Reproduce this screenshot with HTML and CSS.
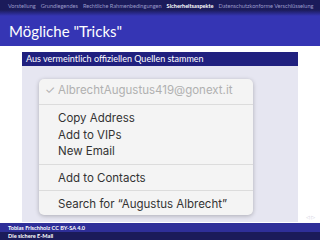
FILE: index.html
```html
<!DOCTYPE html>
<html lang="de">
<head>
    <meta charset="UTF-8">
    <title>Mögliche "Tricks"</title>
    <link rel="stylesheet" href="styles.css">
</head>
<body>
    <div class="slide">
        <div class="nav">
            <span>Vorstellung</span>
            <span>Grundlegendes</span>
            <span>Rechtliche Rahmenbedingungen</span>
            <span class="current">Sicherheitsaspekte</span>
            <span>Datenschutzkonforme Verschlüsselung</span>
        </div>
        <div class="fade"></div>
        <div class="frametitle">Mögliche "Tricks"</div>

        <div class="content">
            <div class="block">
                <div class="block-title">Aus vermeintlich offiziellen Quellen stammen</div>
                <div class="block-body">
                    <div class="menu">
                        <div class="item disabled"><span class="check">✓</span>AlbrechtAugustus419@gonext.it</div>
                        <div class="sep"></div>
                        <div class="item">Copy Address</div>
                        <div class="item">Add to VIPs</div>
                        <div class="item">New Email</div>
                        <div class="sep"></div>
                        <div class="item">Add to Contacts</div>
                        <div class="sep"></div>
                        <div class="item">Search for “Augustus Albrecht”</div>
                    </div>
                </div>
            </div>
            <div class="navsym">◁ ▷</div>
        </div>

        <div class="footer">
            <div class="foot-author">Tobias Frischholz CC BY-SA 4.0</div>
            <div class="foot-title">Die sichere E-Mail</div>
        </div>
    </div>
</body>
</html>
```

FILE: styles.css
```css
body {
    margin: 0;
    font-family: Lato, "DejaVu Sans", sans-serif;
    background: #fff;
}
.slide {
    width: 320px;
    height: 240px;
    display: flex;
    flex-direction: column;
    overflow: hidden;
}
.nav {
    height: 10px;
    background: #1b1b5a;
    display: flex;
    gap: 5px;
    align-items: center;
    padding-left: 8px;
    font-size: 5.6px;
    color: #9a9ac8;
    white-space: nowrap;
}
.nav .current {
    color: #fff;
    font-weight: bold;
}
.fade {
    height: 6px;
    background: linear-gradient(#1b1b5a, #3535b4);
}
.frametitle {
    height: 30px;
    background: #3535b4;
    color: #fff;
    font-size: 15px;
    padding-left: 9px;
    line-height: 30px;
}
.content {
    flex: 1;
    position: relative;
    padding: 6px 22px 0 22px;
}
.block-title {
    background: #20207f;
    color: #fff;
    font-size: 9px;
    height: 14px;
    line-height: 14px;
    padding-left: 4px;
}
.block-body {
    background: #e6e6f1;
    height: 156px;
    padding: 13px 0 0 17px;
    box-sizing: border-box;
}
.menu {
    width: 214px;
    height: 136px;
    background: #f4f4f4;
    border-radius: 5px;
    box-shadow: 0 1px 4px rgba(0, 0, 0, 0.25);
    font-family: Inter, Roboto, sans-serif;
    font-size: 11.5px;
    color: #333;
    padding-top: 1px;
    box-sizing: border-box;
}
.item {
    padding-left: 19px;
    height: 16.5px;
    line-height: 16px;
}
.item.disabled {
    color: #b0b0b0;
    position: relative;
    height: 20px;
    line-height: 20px;
}
.check {
    position: absolute;
    left: 6px;
}
.sep {
    height: 1px;
    background: #dcdcdc;
    margin: 4px 0 5px;
}
.navsym {
    position: absolute;
    right: 5px;
    bottom: 3px;
    font-size: 5px;
    color: #c8c8d8;
}
.footer {
    font-size: 5.6px;
    font-weight: bold;
    color: #fff;
}
.foot-author {
    background: #2f2f99;
    height: 9px;
    line-height: 9px;
    padding-left: 8px;
}
.foot-title {
    background: #1b1b5a;
    height: 8px;
    line-height: 8px;
    padding-left: 8px;
}
```
